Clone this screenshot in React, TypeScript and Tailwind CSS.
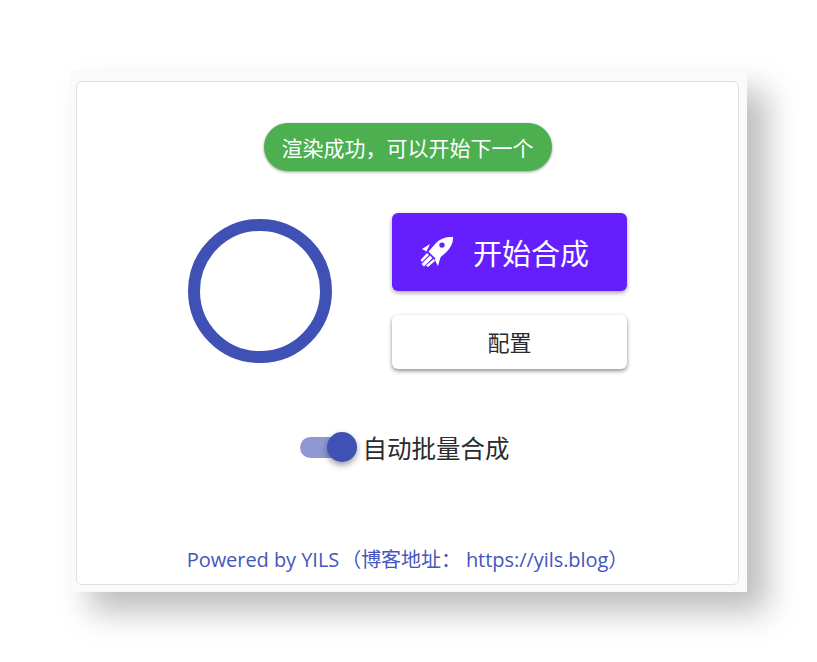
const font = "font-['Open_Sans','Noto_Sans_CJK_SC',sans-serif]";

function RocketIcon() {
  return (
    <svg viewBox="0 0 34 32" className="w-[34px] h-[32px]" fill="currentColor">
      <path
        fillRule="evenodd"
        d="M33 1C27 0.5 21 2 16 7L8.5 15.5L17 24L26 16.5C31 11.5 33.5 6.5 33 1ZM22 6.4A2.7 2.7 0 1 0 22 11.8A2.7 2.7 0 1 0 22 6.4Z"
      />
      <path d="M2 13L10 8L6.5 15.5Z" />
      <path d="M14.5 23.5L21 19.5L18 30Z" />
      <path d="M7 17L9 19L2 26L0.5 24Z" />
      <path d="M10 19.5L12.5 22L4 30.5L1.5 28Z" />
      <path d="M13.5 23L15 25L8 31L6 29.5Z" />
    </svg>
  );
}

export default function App() {
  return (
    <div className={`min-h-[662px] bg-white pt-[70px] pl-[70px] ${font}`}>
      <div className="w-[677px] h-[522px] bg-[#fafafa] pt-[11px] px-[6px] pb-[7px] shadow-[20px_20px_30px_rgba(0,0,0,0.26)]">
        <div className="h-full w-[663px] bg-white border border-[#e0e0e0] rounded-[6px] flex flex-col items-center pt-[41px]">
          <div className="w-[288px] h-[48px] pt-[3px] rounded-full bg-[#4caf50] text-white text-[21px] flex items-center justify-center shadow-[0_1px_3px_rgba(0,0,0,0.4)]">
            渲染成功，可以开始下一个
          </div>

          <div className="flex mt-[42px] w-full pl-[111px]">
            <div className="w-[144px] h-[144px] mt-[6px] rounded-full border-[12px] border-[#3f51b5]" />
            <div className="ml-[60px] flex flex-col gap-[24px]">
              <button className="w-[235px] h-[78px] pr-[10px] rounded-[6px] bg-[#651fff] text-white text-[29px] flex items-center justify-center gap-[19px] shadow-[0_2px_4px_rgba(0,0,0,0.35)]">
                <RocketIcon />
                <span className="pt-[4px]">开始合成</span>
              </button>
              <button className="w-[235px] h-[54px] pt-[1px] rounded-[6px] bg-white text-[#2b2b2b] text-[22px] shadow-[0_2px_4px_rgba(0,0,0,0.45)]">
                配置
              </button>
            </div>
          </div>

          <div className="flex items-center mt-[59px] mr-[6px]">
            <div className="relative w-[48px] h-[21px] rounded-full bg-[#8f98d4]">
              <div className="absolute right-[-9px] top-[-5px] w-[30px] h-[30px] rounded-full bg-[#3f51b5] shadow-[0_3px_6px_rgba(0,0,0,0.4)]" />
            </div>
            <span className="ml-[15px] pt-[3px] text-[24.5px] text-[#2b2b2b]">自动批量合成</span>
          </div>

          <div className="mt-auto pb-[9px] text-[20px] text-[#4456bb] tracking-[-0.05px]">
            Powered by YILS<span className="ml-[2px] mr-[5px]">（博客地址：</span>https://yils.blog）
          </div>
        </div>
      </div>
    </div>
  );
}
